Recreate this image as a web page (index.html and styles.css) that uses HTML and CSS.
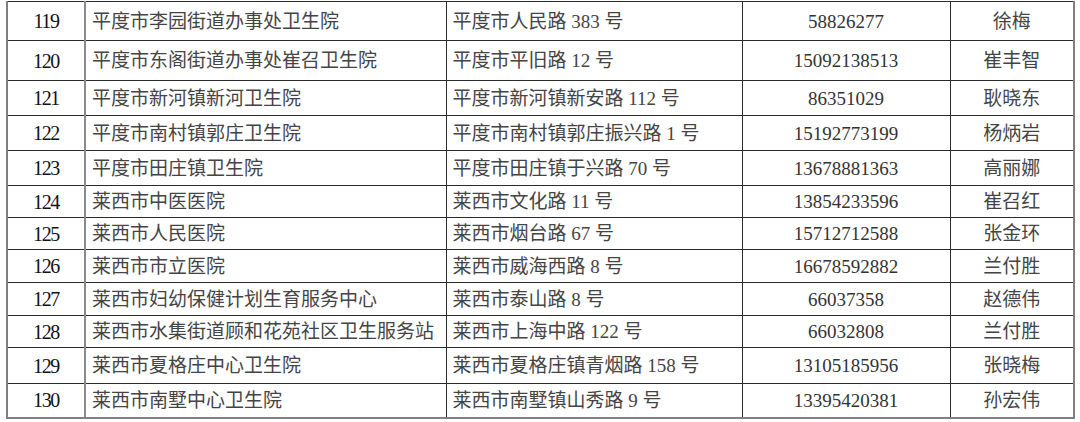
FILE: index.html
```html
<!DOCTYPE html>
<html lang="zh-CN">
<head>
<meta charset="utf-8">
<link rel="stylesheet" href="styles.css">
</head>
<body>
<table class="list">
  <colgroup>
    <col class="c-no"><col class="c-name"><col class="c-addr"><col class="c-tel"><col class="c-person">
  </colgroup>
  <tbody>
    <tr class="h39"><td class="no">119</td><td class="txt">平度市李园街道办事处卫生院</td><td class="txt">平度市人民路 383 号</td><td class="tel">58826277</td><td class="person">徐梅</td></tr>
    <tr class="h40"><td class="no">120</td><td class="txt">平度市东阁街道办事处崔召卫生院</td><td class="txt">平度市平旧路 12 号</td><td class="tel">15092138513</td><td class="person">崔丰智</td></tr>
    <tr class="h35"><td class="no">121</td><td class="txt">平度市新河镇新河卫生院</td><td class="txt">平度市新河镇新安路 112 号</td><td class="tel">86351029</td><td class="person">耿晓东</td></tr>
    <tr class="h35"><td class="no">122</td><td class="txt">平度市南村镇郭庄卫生院</td><td class="txt">平度市南村镇郭庄振兴路 1 号</td><td class="tel">15192773199</td><td class="person">杨炳岩</td></tr>
    <tr class="h35"><td class="no">123</td><td class="txt">平度市田庄镇卫生院</td><td class="txt">平度市田庄镇于兴路 70 号</td><td class="tel">13678881363</td><td class="person">高丽娜</td></tr>
    <tr class="h32"><td class="no">124</td><td class="txt">莱西市中医医院</td><td class="txt">莱西市文化路 11 号</td><td class="tel">13854233596</td><td class="person">崔召红</td></tr>
    <tr class="h32"><td class="no">125</td><td class="txt">莱西市人民医院</td><td class="txt">莱西市烟台路 67 号</td><td class="tel">15712712588</td><td class="person">张金环</td></tr>
    <tr class="h33"><td class="no">126</td><td class="txt">莱西市市立医院</td><td class="txt">莱西市威海西路 8 号</td><td class="tel">16678592882</td><td class="person">兰付胜</td></tr>
    <tr class="h33"><td class="no">127</td><td class="txt">莱西市妇幼保健计划生育服务中心</td><td class="txt">莱西市泰山路 8 号</td><td class="tel">66037358</td><td class="person">赵德伟</td></tr>
    <tr class="h32"><td class="no">128</td><td class="txt">莱西市水集街道顾和花苑社区卫生服务站</td><td class="txt">莱西市上海中路 122 号</td><td class="tel">66032808</td><td class="person">兰付胜</td></tr>
    <tr class="h36"><td class="no">129</td><td class="txt">莱西市夏格庄中心卫生院</td><td class="txt">莱西市夏格庄镇青烟路 158 号</td><td class="tel">13105185956</td><td class="person">张晓梅</td></tr>
    <tr class="h34"><td class="no">130</td><td class="txt">莱西市南墅中心卫生院</td><td class="txt">莱西市南墅镇山秀路 9 号</td><td class="tel">13395420381</td><td class="person">孙宏伟</td></tr>
  </tbody>
</table>
</body>
</html>
```

FILE: styles.css
```css
html, body {
  margin: 0;
  padding: 0;
  background: #ffffff;
}

body {
  padding: 1px 0 0 6px;
}

.list {
  border-collapse: collapse;
  table-layout: fixed;
  width: 1068px;
  font-family: "Liberation Serif", "Noto Sans CJK SC", serif;
  font-size: 19px;
  color: #444444;
  border-left: 2px solid #808080;
  border-right: 2px solid #808080;
  border-bottom: 2px solid #808080;
  border-top: 1px solid #555555;
}

.c-no { width: 78px; }
.c-name { width: 361px; }
.c-addr { width: 296px; }
.c-tel { width: 208px; }
.c-person { width: 124px; }

.list td {
  border: 1px solid #2a2a2a;
  padding: 0 6px;
  vertical-align: middle;
  white-space: nowrap;
  overflow: hidden;
  line-height: 1;
}

.list td:first-child {
  border-left: 2px solid #808080;
  border-right: 2px solid #8a8a8a;
}

.list td:last-child {
  border-right: 2px solid #808080;
}

.list tr:last-child td {
  border-bottom: 2px solid #808080;
}

.list td.no {
  text-align: center;
  color: #111111;
  font-size: 20px;
  letter-spacing: -1.4px;
}

.list td.txt {
  text-align: left;
}

.list td.tel {
  text-align: center;
  color: #333333;
}

.list td.person {
  text-align: center;
}

.h39 { height: 39px; }
.h40 { height: 40px; }
.h36 { height: 36px; }
.h35 { height: 35px; }
.h34 { height: 34px; }
.h33 { height: 33px; }
.h32 { height: 32px; }
```
